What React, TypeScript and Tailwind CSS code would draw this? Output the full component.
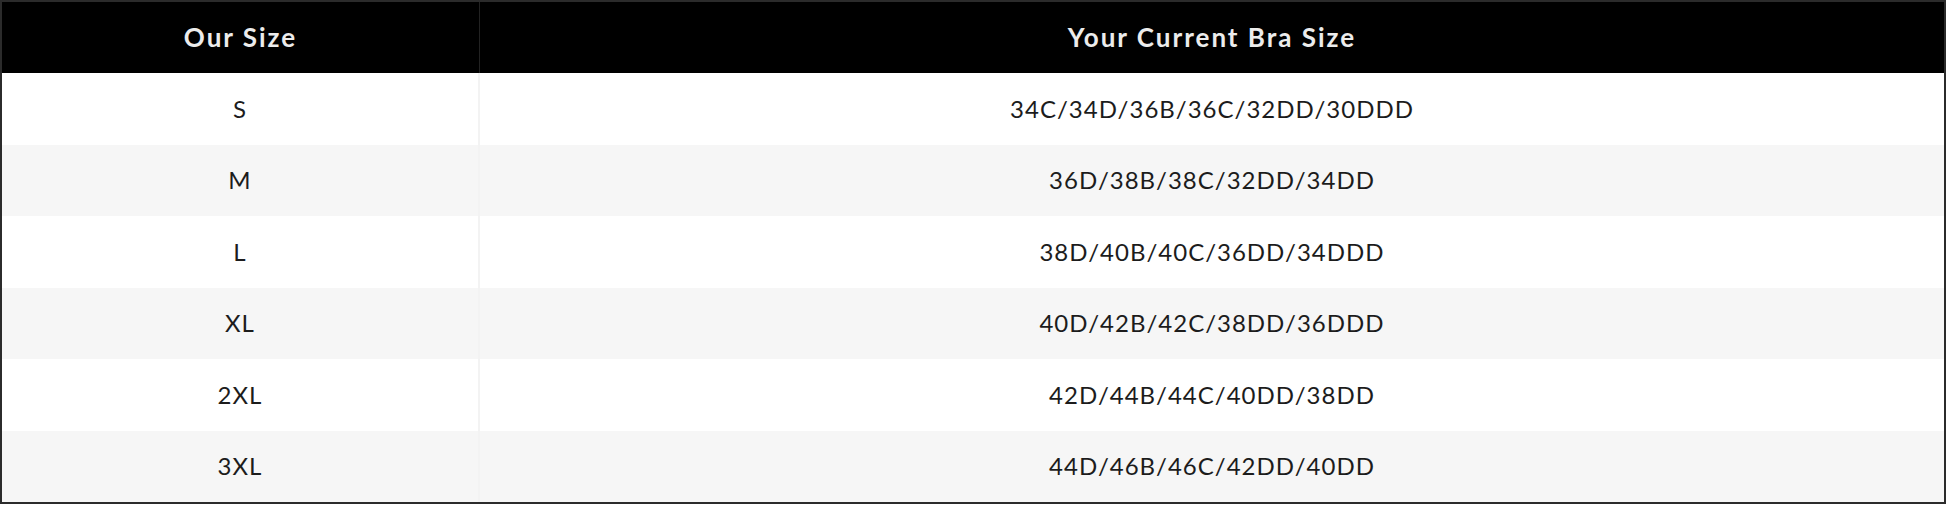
import React from 'react';

const rows = [
  { size: 'S', bra: '34C/34D/36B/36C/32DD/30DDD' },
  { size: 'M', bra: '36D/38B/38C/32DD/34DD' },
  { size: 'L', bra: '38D/40B/40C/36DD/34DDD' },
  { size: 'XL', bra: '40D/42B/42C/38DD/36DDD' },
  { size: '2XL', bra: '42D/44B/44C/40DD/38DD' },
  { size: '3XL', bra: '44D/46B/46C/42DD/40DD' },
];

const App: React.FC = () => {
  return (
    <div className="w-[1946px] h-[505px] bg-white" style={{ fontFamily: 'Lato, "Noto Sans", sans-serif' }}>
      <div className="w-full border-2 border-[#2b2b2b] box-border">
        {/* header */}
        <div className="grid grid-cols-[478px_1fr] h-[71px] bg-black text-[#ececec] font-bold text-[26px] tracking-[2px]">
          <div className="flex items-center justify-center border-r border-[#222]">Our Size</div>
          <div className="flex items-center justify-center">Your Current Bra Size</div>
        </div>
        {rows.map((r, i) => (
          <div
            key={r.size}
            className={`grid grid-cols-[478px_1fr] h-[71.5px] text-[#1c1c1c] text-[24px] tracking-[1px] ${i % 2 === 1 ? 'bg-[#f6f6f6]' : 'bg-white'}`}
          >
            <div className="flex items-center justify-center border-r-2 border-[#f3f3f3]">{r.size}</div>
            <div className="flex items-center justify-center">{r.bra}</div>
          </div>
        ))}
      </div>
    </div>
  );
};

export default App;
